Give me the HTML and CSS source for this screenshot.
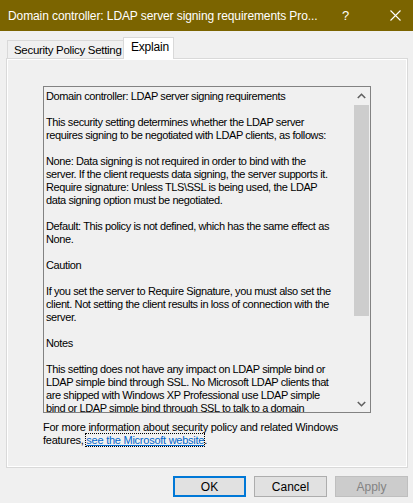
FILE: index.html
```html
<!DOCTYPE html>
<html>
<head>
<meta charset="utf-8">
<link rel="stylesheet" href="styles.css">
</head>
<body>
<div class="window">
  <div class="titlebar">
    <span class="title">Domain controller: LDAP server signing requirements Pro...</span>
    <span class="help">?</span>
    <span class="close"><svg width="11" height="11" viewBox="0 0 11 11"><path d="M0.5 0.5 L10.5 10.5 M10.5 0.5 L0.5 10.5" stroke="#fff" stroke-width="1.1" fill="none"/></svg></span>
  </div>
  <div class="body">
    <div class="tabs">
      <div class="tab">Security Policy Setting</div>
      <div class="tab active">Explain</div>
    </div>
    <div class="panel">
      <div class="textbox">
        <div class="text">Domain controller: LDAP server signing requirements<br><br>This security setting determines whether the LDAP server<br>requires signing to be negotiated with LDAP clients, as follows:<br><br>None: Data signing is not required in order to bind with the<br>server. If the client requests data signing, the server supports it.<br>Require signature: Unless TLS\SSL is being used, the LDAP<br>data signing option must be negotiated.<br><br>Default: This policy is not defined, which has the same effect as<br>None.<br><br>Caution<br><br>If you set the server to Require Signature, you must also set the<br>client. Not setting the client results in loss of connection with the<br>server.<br><br>Notes<br><br>This setting does not have any impact on LDAP simple bind or<br>LDAP simple bind through SSL. No Microsoft LDAP clients that<br>are shipped with Windows XP Professional use LDAP simple<br>bind or LDAP simple bind through SSL to talk to a domain<br>controller.</div>
        <div class="scrollbar">
          <div class="arrow"><svg width="9" height="6" viewBox="0 0 9 6"><path d="M0.8 5 L4.5 1.3 L8.2 5" stroke="#606060" stroke-width="1.6" fill="none"/></svg></div>
          <div class="track"><div class="thumb"></div></div>
          <div class="arrow"><svg width="9" height="6" viewBox="0 0 9 6"><path d="M0.8 1 L4.5 4.7 L8.2 1" stroke="#606060" stroke-width="1.6" fill="none"/></svg></div>
        </div>
      </div>
      <p class="more">For more information about security policy and related Windows<br>features, <a class="link">see the Microsoft website</a>.</p>
    </div>
    <div class="buttons">
      <button class="btn default">OK</button>
      <button class="btn">Cancel</button>
      <button class="btn disabled">Apply</button>
    </div>
  </div>
</div>
</body>
</html>
```
FILE: styles.css
```css
html, body {
  margin: 0;
  padding: 0;
  background: #f0f0f0;
}
.window {
  width: 413px;
  height: 503px;
  background: #f0f0f0;
  font-family: "Liberation Sans", Arial, sans-serif;
  color: #000;
  overflow: hidden;
}
.titlebar {
  height: 31px;
  background: #7b6400;
  color: #fff;
  display: flex;
  align-items: center;
  font-size: 12px;
}
.title {
  margin-left: 8px;
  width: 330px;
  white-space: nowrap;
  letter-spacing: -0.1px;
}
.help {
  margin-left: 4px;
  font-size: 13px;
}
.close {
  margin-left: 41px;
  display: flex;
}
.body {
  padding: 7px 5px 0 6px;
}
.tabs {
  display: flex;
  align-items: flex-end;
  height: 20px;
  padding-left: 1px;
  position: relative;
  z-index: 1;
}
.tab {
  height: 17px;
  border: 1px solid #d9d9d9;
  border-bottom: none;
  background: #f0f0f0;
  font-size: 11.5px;
  line-height: 19px;
  white-space: nowrap;
  overflow: hidden;
  box-sizing: content-box;
  letter-spacing: -0.3px;
}
.tab:first-child {
  width: 109px;
  padding: 0 0 0 6px;
  border-right: none;
}
.tab.active {
  height: 21px;
  margin-bottom: -1px;
  background: #fff;
  padding: 0 0 0 7px;
  line-height: 18px;
  width: 42px;
  font-size: 12px;
  letter-spacing: -0.2px;
}
.panel {
  height: 381px;
  border: 1px solid #d9d9d9;
  box-shadow: inset 0 0 0 1px #fff;
  padding: 27px 0 0 36px;
  box-sizing: content-box;
  width: 364px;
}
.textbox {
  width: 326px;
  height: 325px;
  border: 1px solid #828282;
  display: flex;
  background: #f0f0f0;
}
.text {
  flex: 1;
  overflow: hidden;
  font-size: 11px;
  line-height: 13px;
  padding: 3px 0 0 2px;
  white-space: nowrap;
  letter-spacing: -0.4px;
}
.scrollbar {
  width: 17px;
  display: flex;
  flex-direction: column;
  background: #f0f0f0;
}
.arrow {
  height: 17px;
  display: flex;
  align-items: center;
  justify-content: center;
}
.track {
  flex: 1;
}
.thumb {
  margin: 1px 1px 0 1px;
  height: 211px;
  background: #cdcdcd;
}
.more {
  margin: 8px 0 0 0;
  font-size: 11px;
  line-height: 13px;
  letter-spacing: -0.25px;
}
.link {
  color: #0066cc;
  text-decoration: underline;
  outline: 1px dotted #000;
}
.buttons {
  display: flex;
  justify-content: flex-end;
  gap: 8px;
  margin-top: 8px;
}
.btn {
  width: 73px;
  height: 21px;
  margin: 0;
  padding: 0;
  background: #e1e1e1;
  border: 1px solid #adadad;
  font-family: "Liberation Sans", Arial, sans-serif;
  font-size: 12px;
  color: #000;
  box-sizing: border-box;
}
.btn.default {
  border: 2px solid #0078d7;
}
.btn.disabled {
  background: #cccccc;
  border-color: #bfbfbf;
  color: #838383;
}
```
